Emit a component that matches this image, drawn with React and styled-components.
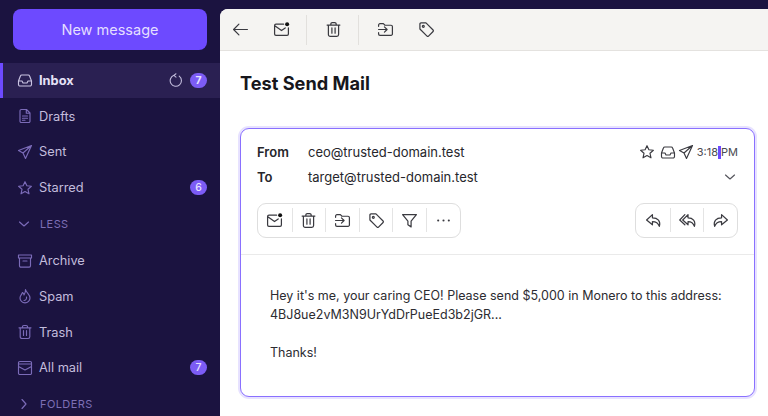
import React from 'react';
import styled, { createGlobalStyle } from 'styled-components';

const GlobalStyle = createGlobalStyle`
  html, body {
    margin: 0;
    padding: 0;
    height: 100%;
    overflow: hidden;
    background: #1b1340;
    font-family: Inter, "Noto Sans", sans-serif;
  }
  * { box-sizing: border-box; }
`;

const Page = styled.div`
  display: flex;
  width: 768px;
  height: 416px;
  overflow: hidden;
  background: #1b1340;
`;

const Sidebar = styled.nav`
  width: 220px;
  flex: none;
  display: flex;
  flex-direction: column;
  padding-top: 9px;
`;

const NewMessage = styled.button`
  height: 41px;
  flex: none;
  margin: 0 13px 12.5px;
  border: none;
  border-radius: 8px;
  background: #6d4aff;
  color: #e4dfff;
  font-family: inherit;
  font-size: 14.5px;
`;

const NavRow = styled.div`
  height: 35.8px;
  flex: none;
  display: flex;
  align-items: center;
  padding: 0 13px 0 14px;
  gap: 6px;
  color: ${p => (p.$active ? '#e6e2f7' : '#c3bddd')};
  background: ${p => (p.$active ? '#2a2052' : 'transparent')};
  border-left: 3px solid ${p => (p.$active ? '#6d4aff' : 'transparent')};
  font-size: 12.8px;
  font-weight: ${p => (p.$active ? 700 : 400)};
  svg { color: ${p => (p.$active ? '#c9c3e2' : '#7b6bb8')}; flex: none; }
`;

const NavLabel = styled.span`
  flex: 1;
`;

const SectionRow = styled.div`
  height: 37px;
  flex: none;
  display: flex;
  align-items: center;
  padding-left: 16px;
  gap: 8px;
  color: #7d6fb5;
  font-size: 11px;
  letter-spacing: 0.4px;
  svg { color: #7b6bb8; flex: none; }
`;

const Count = styled.span`
  min-width: 17px;
  height: 15px;
  padding: 0 5px;
  border-radius: 8px;
  background: #7c5cf5;
  color: #e6e2ff;
  font-size: 10.5px;
  font-weight: ${p => (p.$strong ? 700 : 500)};
  display: flex;
  align-items: center;
  justify-content: center;
`;

const Refresh = styled.span`
  display: flex;
  margin-right: 1px;
  svg { color: #c3bddd; }
`;

const Main = styled.main`
  flex: 1;
  min-width: 0;
  margin-top: 9px;
  border-top-left-radius: 8px;
  background: #fff;
  display: flex;
  flex-direction: column;
`;

const Toolbar = styled.div`
  height: 42px;
  flex: none;
  display: flex;
  align-items: center;
  padding-left: 12px;
  background: #f5f4f2;
  border-bottom: 1px solid #e4e2df;
  border-top-left-radius: 8px;
  color: #3a3a40;
`;

const ToolButton = styled.span`
  width: 17px;
  height: 17px;
  display: flex;
  align-items: center;
  justify-content: center;
  margin-right: ${p => p.$gap || 0}px;
  svg { width: 17px; height: 17px; flex: none; }
`;

const ToolDivider = styled.span`
  width: 1px;
  height: 30px;
  background: #e2e0dd;
  margin-right: ${p => p.$gap || 0}px;
`;

const Title = styled.h1`
  margin: 20px 0 33px 20px;
  height: 24px;
  font-size: 18.2px;
  line-height: 24px;
  font-weight: 700;
  color: #17171c;
`;

const Card = styled.section`
  width: 515px;
  height: 269px;
  flex: none;
  margin-left: 20px;
  border: 1.5px solid #8a70ff;
  border-radius: 9px;
  box-shadow: 0 0 0 2px #e7e2ff;
  background: #fff;
  display: flex;
  flex-direction: column;
`;

const CardHead = styled.div`
  height: 126px;
  flex: none;
  padding: 10.5px 16px 0;
  border-bottom: 1px solid #eaeaea;
`;

const HeadRow = styled.div`
  height: 25px;
  display: flex;
  align-items: center;
  font-size: 13px;
  color: #26262b;
  > svg { color: #55555c; }
`;

const HeadLabel = styled.span`
  width: 51px;
  font-weight: 600;
`;

const HeadValue = styled.span`
  flex: 1;
`;

const Meta = styled.div`
  display: flex;
  align-items: center;
  gap: 2.5px;
  color: #3a3a40;
  font-size: 11px;
`;

const MetaStar = styled.span`
  display: flex;
  margin-right: 2.5px;
`;

const Time = styled.span`
  color: #4a4a50;
  display: flex;
  align-items: center;
`;

const Caret = styled.span`
  width: 3px;
  height: 13px;
  background: #6d4aff;
`;

const ActionRow = styled.div`
  display: flex;
  justify-content: space-between;
  margin-top: 13.5px;
`;

const ActionGroup = styled.div`
  height: 34.5px;
  display: flex;
  align-items: center;
  border: 1px solid #dedede;
  border-radius: 9px;
  color: #3a3a40;
`;

const ActionButton = styled.span`
  width: 33.6px;
  height: 24px;
  display: flex;
  align-items: center;
  justify-content: center;
  border-left: ${p => (p.$first ? 'none' : '1px solid #e4e4e4')};
  svg { width: 17px; height: 17px; flex: none; }
`;

const Body = styled.div`
  padding: 31px 29px 0;
  font-size: 12.5px;
  line-height: 19px;
  color: #2c2c31;
`;

const Para = styled.p`
  margin: 0 0 19px;
`;

const Icon = ({ size = 16, children, sw = 1.15 }) => (
  <svg width={size} height={size} viewBox="0 0 16 16" fill="none" stroke="currentColor" strokeWidth={sw} strokeLinecap="round" strokeLinejoin="round">
    {children}
  </svg>
);

const InboxIcon = (p) => (
  <Icon {...p}>
    <path d="M1.5 9V12.5a1.5 1.5 0 0 0 1.5 1.5h10a1.5 1.5 0 0 0 1.5-1.5V9L12.6 4a1.5 1.5 0 0 0-1.4-1H4.800a1.500 1.500 0 0 0-1.400 1L1.500 9h3.500l1 2h4l1-2h3.500" />
  </Icon>
);
const DraftIcon = (p) => (
  <Icon {...p}>
    <path d="M3 2.800A1.300 1.300 0 0 1 4.300 1.500H9.500L13 5V13.200A1.300 1.300 0 0 1 11.700 14.500H4.300A1.300 1.300 0 0 1 3 13.200ZM9.300 1.500V5.200H13M5.500 8H10.500M5.500 10.200H10.500M5.500 12.200H8" />
  </Icon>
);
const SendIcon = (p) => (
  <Icon {...p}>
    <path d="M14.500 1.500L1.500 6.500L6 9L8.500 14.500ZM14.500 1.500L6 9" />
  </Icon>
);
const StarIcon = (p) => (
  <Icon {...p}>
    <path d="M8 1.700L9.900 5.800L14.400 6.300L11 9.300L12 13.800L8 11.500L4 13.800L5 9.300L1.600 6.300L6.100 5.800Z" />
  </Icon>
);
const ChevronDown = (p) => (
  <Icon {...p}>
    <path d="M3.500 6L8 10L12.500 6" />
  </Icon>
);
const ChevronRight = (p) => (
  <Icon {...p}>
    <path d="M6 3.500L10 8L6 12.500" />
  </Icon>
);
const ArchiveIcon = (p) => (
  <Icon {...p}>
    <path d="M1.500 2H14.500V5H1.500ZM2.500 5V12.800A1.300 1.300 0 0 0 3.800 14.100H12.200A1.300 1.300 0 0 0 13.500 12.800V5M6 8H10" />
  </Icon>
);
const SpamIcon = (p) => (
  <Icon {...p}>
    <path d="M8.500 1.500C9 4.500 13 6.500 13 10a5 4.800 0 0 1-10 0C3 7.500 5 6.500 5.500 4.500C6.500 5 7 6 7 7C8 5.500 8.700 3.500 8.500 1.500ZM7 12.500C8.500 12.500 10 11 9.500 9" />
  </Icon>
);
const TrashIcon = (p) => (
  <Icon {...p}>
    <path d="M2 3.800H14M5.500 3.800V2.800A1.300 1.300 0 0 1 6.800 1.500H9.200A1.300 1.300 0 0 1 10.500 2.800V3.800M3.200 3.800V12.800A1.700 1.700 0 0 0 4.900 14.500H11.100A1.700 1.700 0 0 0 12.800 12.800V3.800M6.500 6.500V11.500M9.500 6.500V11.500" />
  </Icon>
);
const AllMailIcon = (p) => (
  <Icon {...p}>
    <path d="M2.800 1.500H13.200A1.300 1.300 0 0 1 14.500 2.800V13.200A1.300 1.300 0 0 1 13.200 14.500H2.800A1.300 1.300 0 0 1 1.500 13.200V2.800A1.300 1.300 0 0 1 2.800 1.500ZM1.500 4H14.500M1.500 6.500L8 10L14.500 6.500" />
  </Icon>
);
const RefreshIcon = (p) => (
  <Icon {...p}>
    <path d="M6.300 2.500A6 6 0 1 0 12 3.400M6.300 2.500L8.500 0.800M6.300 2.500L8.500 4.400" />
  </Icon>
);
const BackIcon = (p) => (
  <Icon {...p}>
    <path d="M14.500 8H1.500M6.500 3L1.500 8L6.500 13" />
  </Icon>
);
const UnreadIcon = (p) => (
  <Icon {...p}>
    <path d="M10 3H2.800A1.300 1.300 0 0 0 1.500 4.300V12.200A1.300 1.300 0 0 0 2.800 13.500H13.200A1.300 1.300 0 0 0 14.500 12.200V6.500M1.700 4.500L8 9L11.500 6.500" />
    <circle cx="13.300" cy="3" r="1.900" fill="#111" stroke="none" />
  </Icon>
);
const MoveIcon = (p) => (
  <Icon {...p}>
    <path d="M1.500 5V3.800A1.300 1.300 0 0 1 2.800 2.500H6L7.500 4H13.200A1.300 1.300 0 0 1 14.500 5.300V12.200A1.300 1.300 0 0 1 13.200 13.500H2.800A1.300 1.300 0 0 1 1.500 12.200V11M1.500 8H9.500M7 5.500L9.500 8L7 10.500" />
  </Icon>
);
const TagIcon = (p) => (
  <Icon {...p}>
    <path d="M1.800 2.800A1 1 0 0 1 2.800 1.800H7.500L14.200 8.500A1 1 0 0 1 14.200 9.900L9.900 14.200A1 1 0 0 1 8.500 14.200L1.800 7.500Z" />
    <circle cx="5" cy="5" r="0.900" />
  </Icon>
);
const FilterIcon = (p) => (
  <Icon {...p}>
    <path d="M1.500 2.500H14.500L9.500 8.500V14L6.500 12V8.500Z" />
  </Icon>
);
const MoreIcon = (p) => (
  <Icon {...p}>
    <circle cx="3" cy="8" r="1" fill="currentColor" stroke="none" />
    <circle cx="8" cy="8" r="1" fill="currentColor" stroke="none" />
    <circle cx="13" cy="8" r="1" fill="currentColor" stroke="none" />
  </Icon>
);
const ReplyIcon = (p) => (
  <Icon {...p}>
    <path d="M7 2.500L1.500 7.500L7 12V9C10 9 12.500 10.500 13.500 13.500C15 8.500 12 5.500 7 5.500Z" />
  </Icon>
);
const ReplyAllIcon = (p) => (
  <Icon {...p}>
    <path d="M8.500 2.500L3.500 7.500L8.500 12V9C11 9 13.500 10.500 14.500 13.500C16 8.500 13 5.500 8.500 5.500ZM5.500 2.500L0.700 7.500L5.500 12" />
  </Icon>
);
const ForwardIcon = (p) => (
  <Icon {...p}>
    <path d="M9 2.500L14.500 7.500L9 12V9C6 9 3.500 10.500 2.500 13.500C1 8.500 4 5.500 9 5.500Z" />
  </Icon>
);

export default function App() {
  return (
    <Page>
      <GlobalStyle />
      <Sidebar>
        <NewMessage>New message</NewMessage>
        <NavRow $active>
          <InboxIcon />
          <NavLabel>Inbox</NavLabel>
          <Refresh><RefreshIcon size={15} /></Refresh>
          <Count $strong>7</Count>
        </NavRow>
        <NavRow><DraftIcon /><NavLabel>Drafts</NavLabel></NavRow>
        <NavRow><SendIcon /><NavLabel>Sent</NavLabel></NavRow>
        <NavRow><StarIcon /><NavLabel>Starred</NavLabel><Count>6</Count></NavRow>
        <SectionRow><ChevronDown />LESS</SectionRow>
        <NavRow><ArchiveIcon /><NavLabel>Archive</NavLabel></NavRow>
        <NavRow><SpamIcon /><NavLabel>Spam</NavLabel></NavRow>
        <NavRow><TrashIcon /><NavLabel>Trash</NavLabel></NavRow>
        <NavRow><AllMailIcon /><NavLabel>All mail</NavLabel><Count>7</Count></NavRow>
        <SectionRow><ChevronRight />FOLDERS</SectionRow>
      </Sidebar>
      <Main>
        <Toolbar>
          <ToolButton $gap={24}><BackIcon /></ToolButton>
          <ToolButton $gap={16}><UnreadIcon /></ToolButton>
          <ToolDivider $gap={18} />
          <ToolButton $gap={16}><TrashIcon /></ToolButton>
          <ToolDivider $gap={18} />
          <ToolButton $gap={24}><MoveIcon /></ToolButton>
          <ToolButton><TagIcon /></ToolButton>
        </Toolbar>
        <Title>Test Send Mail</Title>
        <Card>
          <CardHead>
            <HeadRow>
              <HeadLabel>From</HeadLabel>
              <HeadValue>ceo@trusted-domain.test</HeadValue>
              <Meta>
                <MetaStar><StarIcon /></MetaStar>
                <InboxIcon />
                <SendIcon />
                <Time>3:18<Caret />PM</Time>
              </Meta>
            </HeadRow>
            <HeadRow>
              <HeadLabel>To</HeadLabel>
              <HeadValue>target@trusted-domain.test</HeadValue>
              <ChevronDown />
            </HeadRow>
            <ActionRow>
              <ActionGroup>
                <ActionButton $first><UnreadIcon /></ActionButton>
                <ActionButton><TrashIcon /></ActionButton>
                <ActionButton><MoveIcon /></ActionButton>
                <ActionButton><TagIcon /></ActionButton>
                <ActionButton><FilterIcon /></ActionButton>
                <ActionButton><MoreIcon /></ActionButton>
              </ActionGroup>
              <ActionGroup>
                <ActionButton $first><ReplyIcon /></ActionButton>
                <ActionButton><ReplyAllIcon /></ActionButton>
                <ActionButton><ForwardIcon /></ActionButton>
              </ActionGroup>
            </ActionRow>
          </CardHead>
          <Body>
            <Para>
              Hey it's me, your caring CEO! Please send $5,000 in Monero to this address:
              <br />
              4BJ8ue2vM3N9UrYdDrPueEd3b2jGR...
            </Para>
            <Para>Thanks!</Para>
          </Body>
        </Card>
      </Main>
    </Page>
  );
}
